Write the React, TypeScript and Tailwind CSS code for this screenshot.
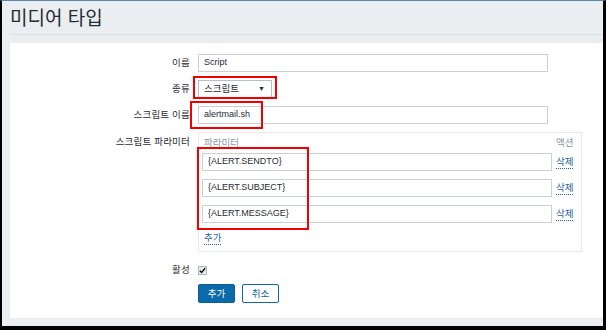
const FONT = "font-['Liberation_Sans','Noto_Sans_CJK_KR',sans-serif]"

const PARAMS = ['{ALERT.SENDTO}', '{ALERT.SUBJECT}', '{ALERT.MESSAGE}']

function Field({ label, children, top = false }: { label: string; children: React.ReactNode; top?: boolean }) {
  return (
    <div className={`flex gap-[8px] ${top ? 'items-start' : 'items-center'}`}>
      <div className={`w-[180px] shrink-0 text-right text-[9.5px] tracking-[0.2px] text-[#1f2c33] ${top ? 'pt-[3px]' : ''}`}>
        {label}
      </div>
      {children}
    </div>
  )
}

function TextInput({ value, w = 'w-[350px]' }: { value: string; w?: string }) {
  return (
    <div className={`${w} h-[18px] border border-[#c9d1d6] bg-white pl-[5px] flex items-center text-[9px] text-[#1f2c33]`}>
      {value}
    </div>
  )
}

function Link({ children }: { children: React.ReactNode }) {
  return (
    <span className="text-[9.5px] leading-[12px] text-[#1f65a6] border-b border-dotted border-[#1f65a6]">
      {children}
    </span>
  )
}

export default function App() {
  return (
    <div className={`${FONT} w-[606px] h-[330px] flex flex-col bg-[#ebeef0] border-l-2 border-l-black border-t border-t-[#5b87ad] border-r-[3px] border-r-black border-b-4 border-b-black pl-[8px]`}>
      {/* Title */}
      <div className="h-[33px] flex items-center pt-[3px] text-[19px] text-[#1f2c33]">
        미디어 타입
      </div>
      <div className="h-px bg-[#dbe0e3]" />

      {/* Form panel */}
      <div className="mt-[8px] h-[275px] bg-white pt-[11px] flex flex-col">
        <div className="flex flex-col gap-[8px]">
          <Field label="이름">
            <TextInput value="Script" />
          </Field>

          <Field label="종류">
            <div className="relative">
              <div className="w-[74px] h-[18px] border border-[#b5bfc6] bg-white pl-[5px] pr-[6px] flex items-center justify-between text-[9.5px] text-[#1f2c33]">
                <span>스크립트</span>
                <span className="text-[7px]">▼</span>
              </div>
              <div className="absolute -left-[5px] -top-[4px] w-[84px] h-[23px] border-2 border-[#f00000]" />
            </div>
          </Field>

          <Field label="스크립트 이름">
            <div className="relative">
              <TextInput value="alertmail.sh" />
              <div className="absolute -left-[8px] -top-[5px] w-[73px] h-[28px] border-2 border-[#f00000]" />
            </div>
          </Field>

          <Field label="스크립트 파라미터" top>
            <div className="relative w-[384px] border border-[#e6eaec] pt-[4px] pl-[3px] pb-[6px]">
              <div className="h-[12px] flex items-center text-[9.5px] text-[#8a9aa3]">
                <span className="w-[354px] pl-[2px]">파라미터</span>
                <span>액션</span>
              </div>
              <div className="mt-[4px] flex flex-col gap-[8px]">
                {PARAMS.map(p => (
                  <div key={p} className="flex items-center gap-[4px]">
                    <TextInput value={p} />
                    <Link>삭제</Link>
                  </div>
                ))}
              </div>
              <div className="mt-[8px] h-[14px] flex items-center pl-[2px]">
                <Link>추가</Link>
              </div>
              <div className="absolute left-[-2px] top-[14px] w-[112px] h-[83px] border-2 border-[#f00000]" />
            </div>
          </Field>
        </div>

        <div className="mt-[11px]">
          <Field label="활성">
            <div className="w-[9px] h-[9px] border border-[#b0b8be] bg-[#e8eaec] flex items-center justify-center">
              <svg width="7" height="7" viewBox="0 0 8 8">
                <path d="M1 4.2 L3 6.3 L7 1.5" fill="none" stroke="#111" strokeWidth="1.6" />
              </svg>
            </div>
          </Field>
        </div>

        <div className="mt-[7px] ml-[188px] flex gap-[7px]">
          <button className="w-[37px] h-[19px] bg-[#0a6aaa] border border-[#0a5d96] text-white text-[9.5px] rounded-[2px]">
            추가
          </button>
          <button className="w-[37px] h-[19px] bg-white border border-[#0a6aaa] text-[#0a6aaa] text-[9.5px] rounded-[2px]">
            취소
          </button>
        </div>
      </div>
    </div>
  )
}
